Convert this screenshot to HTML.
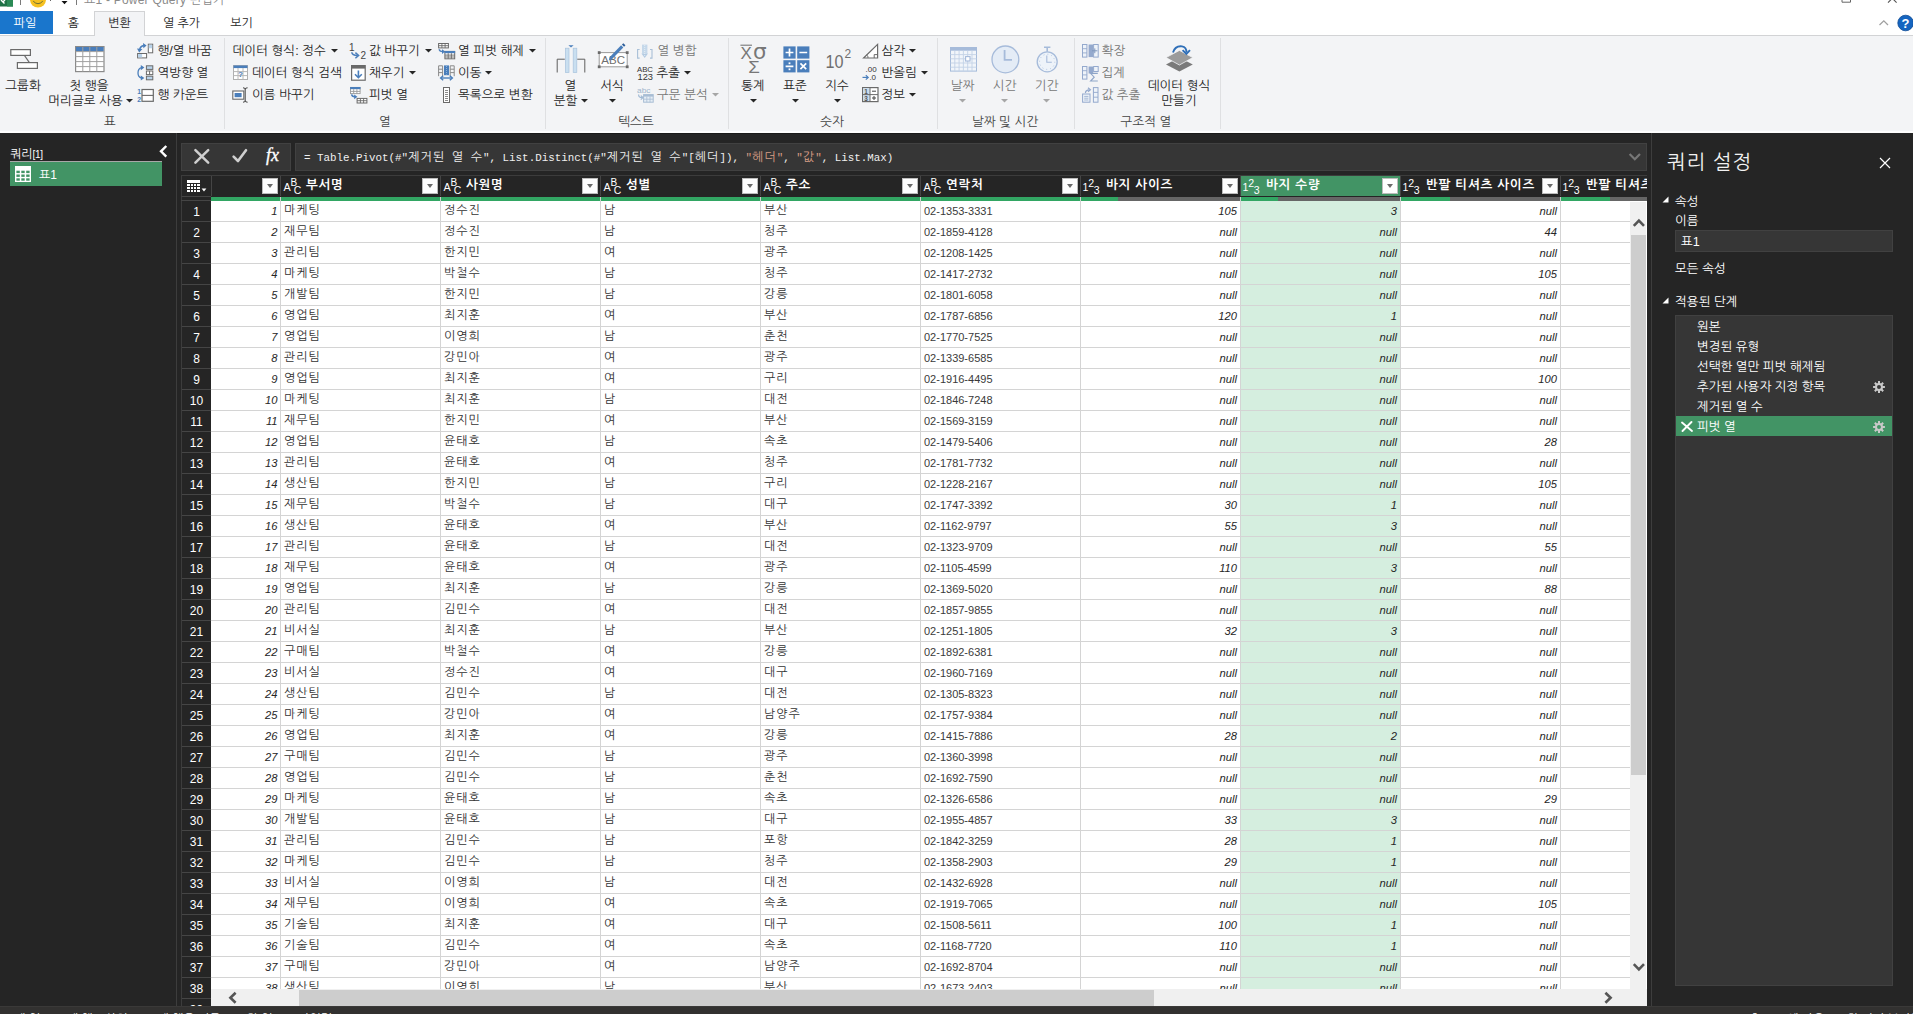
<!DOCTYPE html>
<html lang="ko"><head><meta charset="utf-8">
<title>표1 - Power Query 편집기</title>
<style>
*{box-sizing:border-box;margin:0;padding:0}
html,body{width:1913px;height:1014px;overflow:hidden}
body{position:relative;background:#252525;font-family:"Liberation Sans", "NanumGothic", "Noto Sans CJK KR", sans-serif;font-size:12px;color:#fff;line-height:1}
.a{position:absolute}
svg{position:absolute;overflow:visible}
/* title + tabs */
#title{position:absolute;left:0;top:0;width:1913px;height:36px;background:#fff}
#title .tt{position:absolute;left:84px;top:-6px;letter-spacing:.22px;font-size:12px;color:#8a8a8a;white-space:nowrap}
.tab{position:absolute;top:11px;height:24px;line-height:24px;font-size:12px;color:#262626;text-align:center;white-space:nowrap}
#tabline{position:absolute;left:0;top:35px;width:1913px;height:1px;background:#d2d3d5}
/* ribbon */
#rib{position:absolute;left:0;top:36px;width:1913px;height:95px;background:#f3f4f6}
#ribedge{position:absolute;left:0;top:131px;width:1913px;height:3px;background:#fdfdfd;border-bottom:1px solid #1a1a1a}
#rib .t{position:absolute;white-space:nowrap;color:#262626;font-size:12.6px;line-height:14px;letter-spacing:0}
#rib .g{color:#777}
#rib .c{transform:translateX(-50%);text-align:center}
#rib .gl{position:absolute;top:78.5px;letter-spacing:0;font-size:12.6px;line-height:14px;color:#444;white-space:nowrap;transform:translateX(-50%)}
#rib .sep{position:absolute;top:2px;width:1px;height:91px;background:#dfe0e2}
.dd{display:inline-block;width:0;height:0;border-left:3px solid transparent;border-right:3px solid transparent;border-top:3px solid #262626;vertical-align:middle;margin-left:4px;position:relative;top:-1px}
.g .dd,.dd.g{border-top-color:#a6a6a6}
/* panes */
#left{position:absolute;left:0;top:133px;width:176px;height:873px;background:#252525}
#lsplit{position:absolute;left:176px;top:133px;width:1px;height:873px;background:#3d3d3d}
#rsplit{position:absolute;left:1651px;top:133px;width:1px;height:873px;background:#3d3d3d}
/* formula bar */
.fb{position:absolute;top:143px;height:28px;background:#363636;border:1px solid #414141}
#ftext{position:absolute;left:304px;top:150px;font-family:"Liberation Mono","DejaVu Sans Mono",monospace;font-size:10.85px;line-height:14px;color:#f0f0f0;white-space:pre}
#ftext .fk{font-family:"NanumGothic","Noto Sans CJK KR",sans-serif;font-size:12px;letter-spacing:1.1px}
#ftext em{font-style:normal;color:#d69d85}
/* grid */
#ghead{position:absolute;left:181px;top:175px;width:1466px;height:22px;background:#252525;border-top:1px solid #3c3c3c;overflow:hidden}
#ghead .h{position:absolute;top:0;height:20px;width:160px;border-left:1px solid #454545;font-weight:bold;font-size:12px;line-height:20px;color:#fff;white-space:nowrap;overflow:hidden}
#ghead .h .nm{position:absolute;left:25px;top:-1.5px;letter-spacing:.8px;font-size:12.5px}
#ghead .h.sel{background:#429465}
.fbtn{position:absolute;right:2px;top:2px;width:16px;height:16px;background:#fff;border:1px solid #bdbdbd}
.fbtn:after{content:"";position:absolute;left:4px;top:5px;border-left:3.5px solid transparent;border-right:3.5px solid transparent;border-top:4px solid #6b6b6b}
.ty{position:absolute;left:3px;top:0;font-weight:normal;font-size:11px;color:#fff}
#qbar{position:absolute;left:181px;top:197px;width:1466px;height:4px;background:#252525;overflow:hidden}
#qbar b{position:absolute;top:0;height:4px;background:#32a663}
#qbar i{position:absolute;top:0;height:4px;background:#666}
#grid{position:absolute;left:181px;top:201px;width:1466px;height:788px;background:#fff;overflow:hidden}
#grid .selcol{position:absolute;left:1060px;top:0;width:159px;height:800px;background:#d5eedf}
#grid .vl{position:absolute;top:0;width:1px;height:800px;background:#d4d4d4}
.r{position:absolute;left:0;width:1450px;height:21px;border-bottom:1px solid #d4d4d4}
#rncol{position:absolute;left:181px;top:201px;width:30px;height:805px;overflow:hidden;background:#252525;border-left:1px solid #3c3c3c}
#rncol b{position:absolute;left:0;width:29px;height:21px;border-bottom:1px solid #454545;color:#fff;font-weight:normal;font-size:12px;line-height:22px;text-align:center}
.r .c{position:absolute;top:0;height:20px;line-height:20px;white-space:nowrap;color:#333}
.r .k{font-size:12px;font-style:normal;letter-spacing:1px;top:-1px}
.r .p{font-size:11px;color:#3a3a3a;padding-left:0}
.r .n{width:158px;text-align:right;font-size:11.2px;color:#262626;padding-right:1px}
.r .ix{left:30px;width:68px;text-align:right;font-size:11.2px;color:#262626;padding-right:1.5px}
/* scrollbars */
#vs{position:absolute;left:1630px;top:202px;width:16px;height:804px;background:#f0f0f0}
#vs .th{position:absolute;left:1px;top:33px;width:15px;height:540px;background:#cdcdcd}
#hs{position:absolute;left:211px;top:989px;width:1436px;height:17px;background:#f0f0f0}
#hs .th{position:absolute;left:88px;top:1px;width:855px;height:16px;background:#cdcdcd}
#rnfoot{position:absolute;left:181px;top:988px;width:30px;height:18px;background:#252525;border-left:1px solid #3c3c3c}
/* right pane */
#right{position:absolute;left:1652px;top:133px;width:261px;height:873px;background:#252525}
#right .t{position:absolute;white-space:nowrap;color:#fff;font-size:12.6px;line-height:14px;letter-spacing:0}
#steps{position:absolute;left:23px;top:182px;width:218px;height:671px;background:#363636;border:1px solid #414141}
#steps .s{position:absolute;left:0;width:216px;height:20px;line-height:23px;font-size:12.6px;padding-left:21px;white-space:nowrap;letter-spacing:-.05px}
#steps .s.sel{background:#429465}
#status{position:absolute;left:0;top:1006px;width:1913px;height:8px;background:#323130;border-top:1px solid #3a3938;overflow:hidden}
#status span{position:absolute;top:4.5px;letter-spacing:0;font-size:12px;line-height:14px;color:#fff;white-space:nowrap}
</style></head>
<body>

<div id="title">
<svg style="left:0;top:0" width="14" height="7" viewBox="0 0 14 7"><rect x="0" y="0" width="13" height="6.5" fill="#1e7145"/><rect x="7" y="0" width="6" height="6.5" fill="#2a8a55"/><path d="M1 0 L4.5 3.6 M5 0 L2.8 2" stroke="#fff" stroke-width="1.4" fill="none"/></svg>
<svg style="left:20px;top:0" width="60" height="9" viewBox="0 0 60 9"><rect x="0" y="0" width="1" height="5" fill="#7a7a7a"/><circle cx="18" cy="-0.5" r="8" fill="#f5c020"/><path d="M13.2 1.2 Q18 6.2 22.8 1.2" stroke="#4a5a3a" stroke-width="0.8" fill="none"/><rect x="30" y="0" width="1" height="1" fill="#666"/><path d="M41.5 1 h6 l-3 3.2z" fill="#111"/><rect x="56" y="0" width="1" height="5" fill="#7a7a7a"/></svg>
<span class="tt">표1 - Power Query 편집기</span>
<svg style="left:1840px;top:0" width="60" height="6" viewBox="0 0 60 6"><path d="M2 -3 h8.5 v5.2 h-8.5 z" stroke="#666" stroke-width="1" fill="none"/><path d="M48 -6 l8.6 8.6 M56.6 -6 l-8.6 8.6" stroke="#555" stroke-width="1.1" fill="none"/></svg>
</div>
<div class="tab" style="left:0;width:53px;height:23px;background:#1a76cc;color:#fff;padding-right:3px">파일</div>
<div class="tab" style="left:53px;width:41px">홈</div>
<div class="tab" style="left:94px;width:51px;background:#f3f4f6;border:1px solid #d2d3d5;border-bottom:none;height:25px;z-index:3;line-height:22px">변환</div>
<div class="tab" style="left:145px;width:73px">열 추가</div>
<div class="tab" style="left:218px;width:47px">보기</div>
<div id="tabline"></div>
<svg style="left:1876px;top:14px" width="37" height="20" viewBox="0 0 37 20"><path d="M3.5 11 L7.8 6.8 L12 11" stroke="#a0a0a0" stroke-width="1.3" fill="none"/><circle cx="29.6" cy="9" r="7.8" fill="#1565c0" stroke="#0d4a94" stroke-width="0.8"/><text x="29.6" y="13.5" font-size="13" font-weight="bold" fill="#fff" text-anchor="middle" font-family="Liberation Sans, sans-serif">?</text></svg>

<div id="rib"><svg style="left:10px;top:12px" width="30" height="24" viewBox="0 0 30 24"><rect x="0.8" y="1.6" width="19.6" height="5.8" fill="#fff" stroke="#6a6a6a" stroke-width="1.2"/><rect x="7.4" y="14.6" width="20" height="5.8" fill="#fff" stroke="#6a6a6a" stroke-width="1.2"/><path d="M14.4 7.4 L19.4 14.6" stroke="#6a6a6a" stroke-width="1.1"/></svg>
<span class="t c" style="left:23px;top:43.2px;">그룹화</span>
<svg style="left:75px;top:10px" width="30" height="27" viewBox="0 0 30 27"><rect x="0.6" y="0.6" width="28.4" height="25" fill="#fff" stroke="#8a8a8a" stroke-width="1.2"/><rect x="1" y="1" width="27.6" height="4.4" fill="#4a7ebb"/><path d="M0.6 5.6h28.4M0.6 10.6h28.4M0.6 15.6h28.4M0.6 20.6h28.4M7.8 1v24.6M14.8 1v24.6M21.8 1v24.6" stroke="#a0a0a0" stroke-width="1" fill="none"/></svg>
<span class="t c" style="left:89px;top:43.2px;">첫 행을</span>
<span class="t c" style="left:85.5px;top:58.2px;">머리글로 사용</span>
<svg style="left:125.5px;top:63px" width="7" height="4" viewBox="0 0 7 4"><path d="M0 0h7L3.5 3.6z" fill="#262626"/></svg>
<svg style="left:137px;top:7px" width="17" height="16" viewBox="0 0 17 16"><rect x="11.3" y="1.2" width="4.4" height="8.6" fill="#fff" stroke="#6a6a6a" stroke-width="1"/><rect x="11.8" y="1.7" width="3.4" height="3.6" fill="#b9d3ea"/><rect x="0.6" y="10.5" width="9" height="4.4" fill="#fff" stroke="#6a6a6a" stroke-width="1"/><rect x="1.1" y="11" width="4" height="3.4" fill="#b9d3ea"/><path d="M2.6 7 Q3.2 3.2 7 2.6" stroke="#4a7ebb" stroke-width="1.5" fill="none"/><path d="M6 0 L9.6 2.4 L6.4 5.2z M0 5.4 L5.4 6 L2.2 9.6z" fill="#4a7ebb"/></svg>
<span class="t" style="left:157.5px;top:7.7px;">행/열 바꿈</span>
<svg style="left:137px;top:29px" width="17" height="16" viewBox="0 0 17 16"><rect x="9.4" y="0.8" width="6.4" height="3.6" fill="#b9d3ea" stroke="#6a6a6a" stroke-width="1"/><rect x="9.4" y="6" width="6.4" height="3.6" fill="#fff" stroke="#6a6a6a" stroke-width="1"/><path d="M12.6 6v3.6" stroke="#6a6a6a" stroke-width="1"/><rect x="9.4" y="11.2" width="6.4" height="3.6" fill="#b9d3ea" stroke="#6a6a6a" stroke-width="1"/><path d="M4.6 2.6 Q1 3.5 1 8 Q1 12.2 4.6 13" stroke="#4a7ebb" stroke-width="1.3" fill="none"/><path d="M3.8 0 L7.4 2.6 L3.8 5.2z M3.8 10.4 L7.4 13 L3.8 15.6z" fill="#4a7ebb"/></svg>
<span class="t" style="left:157.5px;top:29.7px;">역방향 열</span>
<svg style="left:137px;top:51px" width="17" height="16" viewBox="0 0 17 16"><rect x="5" y="2.5" width="11.3" height="11.8" fill="#fff" stroke="#6a6a6a" stroke-width="1.2"/><path d="M5 8.4h11.3" stroke="#6a6a6a" stroke-width="1.1"/><text x="0.2" y="7.2" font-size="6.8" font-weight="bold" fill="#4a7ebb" font-family="Liberation Sans,sans-serif">1</text><text x="0.2" y="15.4" font-size="6.8" font-weight="bold" fill="#4a7ebb" font-family="Liberation Sans,sans-serif">2</text></svg>
<span class="t" style="left:157.5px;top:52.2px;">행 카운트</span>
<span class="gl" style="left:110px">표</span>
<div class="sep" style="left:224px"></div>
<span class="t" style="left:232.5px;top:7.7px;">데이터 형식: 정수</span>
<svg style="left:331px;top:13px" width="7" height="4" viewBox="0 0 7 4"><path d="M0 0h7L3.5 3.6z" fill="#262626"/></svg>
<svg style="left:232.5px;top:29px" width="15" height="15" viewBox="0 0 15 15"><rect x="0.5" y="0.5" width="14" height="14" fill="#fff" stroke="#b0b0b0" stroke-width="1"/><rect x="0.5" y="0.5" width="14" height="2.6" fill="#4a7ebb"/><path d="M0.5 6.6h14M0.5 10.6h14M5 3v11.5M10 3v11.5" stroke="#b8b8b8" stroke-width="1" fill="none"/><text x="7.4" y="11.6" font-size="8" font-weight="bold" fill="#4a7ebb" text-anchor="middle" font-family="Liberation Sans,sans-serif">?</text></svg>
<span class="t" style="left:252px;top:29.7px;">데이터 형식 검색</span>
<svg style="left:231.5px;top:51px" width="17" height="16" viewBox="0 0 17 16"><rect x="0.8" y="4" width="11" height="8.2" fill="#fff" stroke="#6a6a6a" stroke-width="1.1"/><rect x="2.6" y="6" width="7" height="4.2" fill="#4a7ebb"/><path d="M13.2 1.5v12.8M11 0.8 Q13.2 0.8 13.2 2.2 Q13.2 0.8 15.6 0.8M11 15.2 Q13.2 15.2 13.2 13.8 Q13.2 15.2 15.6 15.2" stroke="#444" stroke-width="1" fill="none"/></svg>
<span class="t" style="left:252px;top:52.2px;">이름 바꾸기</span>
<svg style="left:349px;top:6px" width="18" height="18" viewBox="0 0 18 18"><text x="0" y="9" font-size="10" fill="#444" font-family="Liberation Sans,sans-serif">1</text><text x="11.6" y="16.8" font-size="10" fill="#444" font-family="Liberation Sans,sans-serif">2</text><path d="M2.8 10.2 Q3 13.4 8.6 13.4" stroke="#4a7ebb" stroke-width="1.5" fill="none"/><path d="M6.4 10.6 L9.6 13.4 L6.4 16.2" stroke="#4a7ebb" stroke-width="1.5" fill="none"/></svg>
<span class="t" style="left:369px;top:7.7px;">값 바꾸기</span>
<svg style="left:425px;top:13px" width="7" height="4" viewBox="0 0 7 4"><path d="M0 0h7L3.5 3.6z" fill="#262626"/></svg>
<svg style="left:350.5px;top:29px" width="15" height="16" viewBox="0 0 15 16"><rect x="0.6" y="0.6" width="13.6" height="14.6" fill="#fff" stroke="#6a6a6a" stroke-width="1.2"/><rect x="0.6" y="0.6" width="13.6" height="3" fill="#6a6a6a"/><path d="M7.4 5.5v7M4 9.3 L7.4 12.7 L10.8 9.3" stroke="#4a7ebb" stroke-width="1.6" fill="none"/></svg>
<span class="t" style="left:369px;top:29.7px;">채우기</span>
<svg style="left:409px;top:35px" width="7" height="4" viewBox="0 0 7 4"><path d="M0 0h7L3.5 3.6z" fill="#262626"/></svg>
<svg style="left:349.5px;top:51px" width="18" height="17" viewBox="0 0 18 17"><rect x="0.5" y="0.4" width="9.6" height="6.2" fill="#fff" stroke="#9a9a9a" stroke-width="0.9"/><rect x="0.1" y="0" width="10.4" height="2.2" fill="#4a7ebb"/><path d="M0.5 4.4h9.6M3.7 2.2v4.4M6.9 2.2v4.4" stroke="#9a9a9a" stroke-width="0.9" fill="none"/><path d="M1.6 7.4 Q1.8 9.8 5 9.8" stroke="#4a7ebb" stroke-width="1.4" fill="none"/><path d="M4.2 7.4 L7.4 9.8 L4.2 12.2z" fill="#4a7ebb"/><rect x="7.1" y="11.4" width="9.8" height="4.6" fill="#fff" stroke="#6a6a6a" stroke-width="1"/><path d="M7.1 13.7h9.8M10.4 11.4v4.6M13.6 11.4v4.6" stroke="#6a6a6a" stroke-width="0.9" fill="none"/></svg>
<span class="t" style="left:369px;top:52.2px;">피벗 열</span>
<svg style="left:437.5px;top:7px" width="18" height="17" viewBox="0 0 18 17"><rect x="0.6" y="0.5" width="9.8" height="4.4" fill="#fff" stroke="#6a6a6a" stroke-width="1"/><path d="M0.6 2.7h9.8M3.9 0.5v4.4M7.1 0.5v4.4" stroke="#6a6a6a" stroke-width="0.9" fill="none"/><path d="M1.2 6.2 Q1.4 8.6 4.8 8.6" stroke="#4a7ebb" stroke-width="1.4" fill="none"/><path d="M4 6.2 L7.2 8.6 L4 11z" fill="#4a7ebb"/><rect x="6.9" y="8.4" width="9.8" height="7.4" fill="#fff" stroke="#6a6a6a" stroke-width="1"/><rect x="6.5" y="8" width="10.6" height="2.2" fill="#4a7ebb"/><path d="M6.9 12.1h9.8M6.9 14h9.8M10.2 10.2v5.6M13.4 10.2v5.6" stroke="#6a6a6a" stroke-width="0.9" fill="none"/></svg>
<span class="t" style="left:458px;top:7.7px;">열 피벗 해제</span>
<svg style="left:529px;top:13px" width="7" height="4" viewBox="0 0 7 4"><path d="M0 0h7L3.5 3.6z" fill="#262626"/></svg>
<svg style="left:437.5px;top:29px" width="17" height="16" viewBox="0 0 17 16"><path d="M0.6 0.8h4v10.4M0.6 0.8v10.4M0.6 4.2h4M0.6 7.6h4M12.2 0.8h4v10.4M12.2 0.8v10.4M12.2 4.2h4M12.2 7.6h4" stroke="#8a8a8a" stroke-width="1" fill="none"/><rect x="6" y="0.4" width="5" height="9.8" fill="#4a7ebb"/><path d="M8.5 1v8.6" stroke="#9cc0e4" stroke-width="0.8" stroke-dasharray="1 1"/><path d="M3 13h11" stroke="#4a7ebb" stroke-width="1.4"/><path d="M5.2 10.8 L2.6 13 L5.2 15.2M11.8 10.8 L14.4 13 L11.8 15.2" stroke="#4a7ebb" stroke-width="1.4" fill="none"/></svg>
<span class="t" style="left:458px;top:29.7px;">이동</span>
<svg style="left:485px;top:35px" width="7" height="4" viewBox="0 0 7 4"><path d="M0 0h7L3.5 3.6z" fill="#262626"/></svg>
<svg style="left:442px;top:51px" width="9" height="16" viewBox="0 0 9 16"><rect x="1" y="0.5" width="6" height="15" fill="#fff" stroke="#6a6a6a" stroke-width="1" shape-rendering="crispEdges"/><path d="M3 3.5h2.6M3 5.5h2.6M3 7.5h2.6M3 9.5h2.6M3 11.5h2.6M3 13.5h2.6" stroke="#8a8a8a" stroke-width="1" shape-rendering="crispEdges"/></svg>
<span class="t" style="left:458px;top:52.2px;">목록으로 변환</span>
<span class="gl" style="left:385px">열</span>
<div class="sep" style="left:545px"></div>
<svg style="left:556px;top:8px" width="30" height="29" viewBox="0 0 30 29"><path d="M1.2 28.5V15.2h7.6M28.8 28.5V15.2h-7.6" stroke="#5e5e5e" stroke-width="1" fill="none"/><rect x="9.4" y="4.2" width="3.6" height="24.4" fill="#c9dff0" stroke="#a9c3dc" stroke-width="0.7"/><rect x="17.2" y="4.2" width="3.6" height="24.4" fill="#c9dff0" stroke="#a9c3dc" stroke-width="0.7"/><path d="M12.4 1.2h5.2L15 3.6z" fill="#4a7ebb"/></svg>
<span class="t c" style="left:570.5px;top:43.2px;">열</span>
<span class="t c" style="left:565.5px;top:58.2px;">분할</span>
<svg style="left:581px;top:63px" width="7" height="4" viewBox="0 0 7 4"><path d="M0 0h7L3.5 3.6z" fill="#262626"/></svg>
<svg style="left:596.5px;top:6px" width="33" height="28" viewBox="0 0 33 28"><rect x="2.2" y="10.6" width="28" height="14.2" fill="#fff" stroke="#9a9a9a" stroke-width="1"/><rect x="0.8" y="9.2" width="2.8" height="2.8" fill="#6a6a6a"/><rect x="28.8" y="9.2" width="2.8" height="2.8" fill="#6a6a6a"/><rect x="0.8" y="23.4" width="2.8" height="2.8" fill="#6a6a6a"/><rect x="28.8" y="23.4" width="2.8" height="2.8" fill="#6a6a6a"/><text x="16.2" y="22.2" font-size="11.5" fill="#6e6e6e" text-anchor="middle" font-family="Liberation Sans,sans-serif">ABC</text><path d="M13.4 16.6 L25.2 4.4" stroke="#4a7ebb" stroke-width="3"/><path d="M11.8 18.4 L14.6 17.6 L12.5 15.6z" fill="#4a7ebb"/><path d="M26 3.6 L27.4 2.2" stroke="#2e5e9a" stroke-width="3"/></svg>
<span class="t c" style="left:612px;top:43.2px;">서식</span>
<svg style="left:609px;top:63px" width="7" height="4" viewBox="0 0 7 4"><path d="M0 0h7L3.5 3.6z" fill="#262626"/></svg>
<svg style="left:636.5px;top:8px" width="16" height="15" viewBox="0 0 16 15"><path d="M2.6 5.5H0.6v8.6h2M13 5.5h2v8.6h-2" stroke="#a9c0d8" stroke-width="1.1" fill="none"/><rect x="5" y="0.6" width="5.4" height="9" fill="#c5d8ea"/><path d="M4.4 9.6 L7.7 14 L11 9.6z" fill="#b4cbe2"/><path d="M7.7 1v12" stroke="#e9f0f7" stroke-width="0.9" stroke-dasharray="1 1"/></svg>
<span class="t g" style="left:657.5px;top:7.7px;">열 병합</span>
<svg style="left:636.5px;top:28.5px" width="17" height="16" viewBox="0 0 17 16"><text x="0" y="7" font-size="7.6" fill="#333" font-family="Liberation Sans,sans-serif" textLength="16" lengthAdjust="spacingAndGlyphs">ABC</text><text x="0.5" y="15.2" font-size="8.6" fill="#333" font-family="Liberation Sans,sans-serif" textLength="15.5" lengthAdjust="spacingAndGlyphs">123</text></svg>
<span class="t" style="left:656.5px;top:29.7px;">추출</span>
<svg style="left:684px;top:35px" width="7" height="4" viewBox="0 0 7 4"><path d="M0 0h7L3.5 3.6z" fill="#262626"/></svg>
<svg style="left:636.5px;top:51px" width="17" height="16" viewBox="0 0 17 16"><text x="0" y="6.4" font-size="8" fill="#9fb4cc" font-family="Liberation Sans,sans-serif" textLength="13.5" lengthAdjust="spacingAndGlyphs">abc</text><path d="M1.6 7.4 Q1.6 10.6 5 10.6" stroke="#9fb8d4" stroke-width="1.2" fill="none"/><path d="M3.8 8.6 L6 10.6 L3.8 12.6" stroke="#9fb8d4" stroke-width="1.2" fill="none"/><rect x="6.6" y="7.6" width="9.6" height="7.6" fill="#e6eef6" stroke="#a8bdd4" stroke-width="1"/><rect x="6.6" y="7.6" width="9.6" height="2" fill="#a8bdd4"/><path d="M6.6 12.2h9.6M9.8 9.6v5.6M13 9.6v5.6" stroke="#a8bdd4" stroke-width="0.8"/></svg>
<span class="t g" style="left:657px;top:52.2px;">구문 분석</span>
<svg style="left:712px;top:57px" width="7" height="4" viewBox="0 0 7 4"><path d="M0 0h7L3.5 3.6z" fill="#a6a6a6"/></svg>
<span class="gl" style="left:636px">텍스트</span>
<div class="sep" style="left:728px"></div>
<svg style="left:740px;top:8px" width="28" height="30" viewBox="0 0 28 30"><text x="0.6" y="14.7" font-size="16.9" fill="#777" font-family="Liberation Sans,sans-serif">X</text><path d="M0.4 1.2h11.6" stroke="#777" stroke-width="1.1"/><text x="13" y="15" font-size="21.5" fill="#777" font-family="DejaVu Sans,Liberation Sans,sans-serif">σ</text><text x="8.2" y="29.1" font-size="17" fill="#777" font-family="Liberation Sans,sans-serif" textLength="11.6" lengthAdjust="spacingAndGlyphs">Σ</text></svg>
<span class="t c" style="left:753px;top:43.2px;">통계</span>
<svg style="left:750px;top:63px" width="7" height="4" viewBox="0 0 7 4"><path d="M0 0h7L3.5 3.6z" fill="#262626"/></svg>
<svg style="left:782.5px;top:9.5px" width="27" height="27" viewBox="0 0 27 27"><rect x="0.4" y="0.4" width="12.2" height="12.2" fill="#4a7ebb"/><rect x="14.2" y="0.4" width="12.2" height="12.2" fill="#4a7ebb"/><rect x="0.4" y="14.2" width="12.2" height="12.2" fill="#4a7ebb"/><rect x="14.2" y="14.2" width="12.2" height="12.2" fill="#4a7ebb"/><path d="M6.5 2.6v7.8M2.6 6.5h7.8M16.4 6.5h7.8M2.6 20.3h7.8M17.4 17.4l5.8 5.8M23.2 17.4l-5.8 5.8" stroke="#fff" stroke-width="1.7" fill="none"/><rect x="5.6" y="16.4" width="1.8" height="1.8" fill="#fff"/><rect x="5.6" y="22.4" width="1.8" height="1.8" fill="#fff"/></svg>
<span class="t c" style="left:795px;top:43.2px;">표준</span>
<svg style="left:792px;top:63px" width="7" height="4" viewBox="0 0 7 4"><path d="M0 0h7L3.5 3.6z" fill="#262626"/></svg>
<svg style="left:825px;top:10px" width="27" height="24" viewBox="0 0 27 24"><text x="0.4" y="21.9" font-size="17.6" fill="#6e6e6e" font-family="Liberation Sans,sans-serif" textLength="18" lengthAdjust="spacingAndGlyphs">10</text><text x="19.6" y="12" font-size="12" fill="#6e6e6e" font-family="Liberation Sans,sans-serif">2</text></svg>
<span class="t c" style="left:837px;top:43.2px;">지수</span>
<svg style="left:834px;top:63px" width="7" height="4" viewBox="0 0 7 4"><path d="M0 0h7L3.5 3.6z" fill="#262626"/></svg>
<svg style="left:861.5px;top:7px" width="17" height="16" viewBox="0 0 17 16"><path d="M1.6 15 L15.6 1.4 V15 Z" fill="#fff" stroke="#6a6a6a" stroke-width="1.2"/><path d="M12.2 15v-3.4h3.4" stroke="#6a6a6a" stroke-width="1" fill="none"/><path d="M6 15 Q6.4 12.6 4.6 12" stroke="#6a6a6a" stroke-width="0.9" fill="none"/></svg>
<span class="t" style="left:881.5px;top:7.7px;">삼각</span>
<svg style="left:909px;top:13px" width="7" height="4" viewBox="0 0 7 4"><path d="M0 0h7L3.5 3.6z" fill="#262626"/></svg>
<svg style="left:861.5px;top:29px" width="17" height="16" viewBox="0 0 17 16"><text x="3.6" y="7.4" font-size="8" fill="#333" font-family="Liberation Sans,sans-serif">.00</text><text x="7.4" y="15.4" font-size="8" fill="#333" font-family="Liberation Sans,sans-serif">.0</text><path d="M0.5 12.4h5.4" stroke="#4a7ebb" stroke-width="1.2"/><path d="M3.8 10.2 L6.2 12.4 L3.8 14.6" stroke="#4a7ebb" stroke-width="1.2" fill="none"/></svg>
<span class="t" style="left:881.5px;top:29.7px;">반올림</span>
<svg style="left:921px;top:35px" width="7" height="4" viewBox="0 0 7 4"><path d="M0 0h7L3.5 3.6z" fill="#262626"/></svg>
<svg style="left:861.5px;top:51px" width="17" height="16" viewBox="0 0 17 16"><rect x="0.6" y="0.6" width="15.4" height="14" fill="#fff" stroke="#6a6a6a" stroke-width="1.2"/><rect x="1.2" y="1.2" width="6.6" height="12.8" fill="#c9dced"/><path d="M8 0.6v14M0.6 7.6h15.4" stroke="#6a6a6a" stroke-width="1"/><text x="2.2" y="6.6" font-size="6.4" font-weight="bold" fill="#555" font-family="Liberation Sans,sans-serif">1</text><text x="2.2" y="13.6" font-size="6.4" font-weight="bold" fill="#555" font-family="Liberation Sans,sans-serif">3</text><path d="M10 4.2h4M10 11h4M12 9v4" stroke="#444" stroke-width="1"/></svg>
<span class="t" style="left:881.5px;top:52.2px;">정보</span>
<svg style="left:909px;top:57px" width="7" height="4" viewBox="0 0 7 4"><path d="M0 0h7L3.5 3.6z" fill="#262626"/></svg>
<span class="gl" style="left:832px">숫자</span>
<div class="sep" style="left:937px"></div>
<svg style="left:949.5px;top:10.5px" width="27" height="25" viewBox="0 0 27 25"><rect x="0.5" y="0.5" width="26" height="23.6" fill="#f1f5fa" stroke="#a6bbda" stroke-width="1"/><rect x="0.5" y="0.5" width="26" height="3.2" fill="#a6bbda"/><path d="M0.5 7.6h26M0.5 11.8h26M0.5 16h26M0.5 20.2h26M4.8 3.7v20.4M9.1 3.7v20.4M13.4 3.7v20.4M17.7 3.7v20.4M22 3.7v20.4" stroke="#c3d2e6" stroke-width="0.9"/><rect x="15.6" y="9.6" width="4.4" height="4.4" fill="#fff" stroke="#a6bbda" stroke-width="1.1"/></svg>
<span class="t c g" style="left:962.5px;top:43.2px;">날짜</span>
<svg style="left:959px;top:63px" width="7" height="4" viewBox="0 0 7 4"><path d="M0 0h7L3.5 3.6z" fill="#a6a6a6"/></svg>
<svg style="left:990.5px;top:8.5px" width="29" height="29" viewBox="0 0 29 29"><circle cx="14.4" cy="14.4" r="13.4" fill="#e4ecf6" stroke="#a6bbda" stroke-width="1.3"/><path d="M13.6 5v9.8h7.4" stroke="#a6bbda" stroke-width="1.8" fill="none"/></svg>
<span class="t c g" style="left:1004.5px;top:43.2px;">시간</span>
<svg style="left:1001px;top:63px" width="7" height="4" viewBox="0 0 7 4"><path d="M0 0h7L3.5 3.6z" fill="#a6a6a6"/></svg>
<svg style="left:1035.5px;top:9.5px" width="23" height="27" viewBox="0 0 23 27"><circle cx="11.2" cy="15.8" r="10" fill="#eef3f9" stroke="#a6bbda" stroke-width="1.3"/><circle cx="11.2" cy="15.8" r="7.6" fill="none" stroke="#a6bbda" stroke-width="0.9" stroke-dasharray="0.9 3.08"/><path d="M8 1.2h6.4M11.2 1.2v4.6" stroke="#a6bbda" stroke-width="1.6" fill="none"/><path d="M10.8 9.6v6.6h5" stroke="#a6bbda" stroke-width="1.1" fill="none"/></svg>
<span class="t c g" style="left:1046.5px;top:43.2px;">기간</span>
<svg style="left:1043px;top:63px" width="7" height="4" viewBox="0 0 7 4"><path d="M0 0h7L3.5 3.6z" fill="#a6a6a6"/></svg>
<span class="gl" style="left:1005px">날짜 및 시간</span>
<div class="sep" style="left:1074px"></div>
<svg style="left:1081.5px;top:7.5px" width="17" height="14" viewBox="0 0 17 14"><rect x="0.5" y="0.5" width="4.4" height="12.6" fill="#eef3f9" stroke="#94a9cd" stroke-width="1"/><path d="M0.5 4.7h4.4M0.5 8.9h4.4" stroke="#94a9cd" stroke-width="0.9"/><rect x="6.6" y="0.5" width="4.6" height="12.6" fill="#94a9cd"/><rect x="11.6" y="0.5" width="4.6" height="12.6" fill="#eef3f9" stroke="#94a9cd" stroke-width="1"/><path d="M10 6.8h5.4M12.8 4.4v4.8" stroke="#7f97bd" stroke-width="1"/></svg>
<span class="t g" style="left:1101.5px;top:7.7px;">확장</span>
<svg style="left:1081.5px;top:29.5px" width="17" height="16" viewBox="0 0 17 16"><rect x="0.5" y="0.5" width="4.4" height="12.6" fill="#eef3f9" stroke="#94a9cd" stroke-width="1"/><path d="M0.5 4.7h4.4M0.5 8.9h4.4" stroke="#94a9cd" stroke-width="0.9"/><rect x="6.6" y="0.5" width="4.6" height="7" fill="#94a9cd"/><rect x="11.6" y="0.5" width="4.6" height="5" fill="#eef3f9" stroke="#94a9cd" stroke-width="1"/><path d="M15.8 7.4H8.6l3.6 3.8-3.6 3.8h7.2" stroke="#8ea5c8" stroke-width="1.1" fill="none"/></svg>
<span class="t g" style="left:1101.5px;top:29.7px;">집계</span>
<svg style="left:1081.5px;top:51px" width="17" height="16" viewBox="0 0 17 16"><rect x="11.4" y="0.6" width="4.6" height="14.6" fill="#eef3f9" stroke="#94a9cd" stroke-width="1"/><path d="M11.4 5.4h4.6M11.4 10.2h4.6" stroke="#94a9cd" stroke-width="0.9"/><rect x="0.6" y="7" width="7.4" height="8.2" fill="#eef3f9" stroke="#94a9cd" stroke-width="1"/><path d="M2.2 9.4h4.2M2.2 11.2h4.2M2.2 13h4.2" stroke="#94a9cd" stroke-width="0.8"/><path d="M3.4 6 Q3.6 2.8 7.4 2.8" stroke="#94a9cd" stroke-width="1.2" fill="none"/><path d="M6 0.8 L8.4 2.8 L6 4.8" stroke="#94a9cd" stroke-width="1.2" fill="none"/></svg>
<span class="t g" style="left:1101.5px;top:52.2px;">값 추출</span>
<svg style="left:1164.5px;top:8px" width="29" height="29" viewBox="0 0 29 29"><path d="M1 20.4 L14.4 13.6 L27.8 20.4 L14.4 27.6z" fill="#7a7a7a"/><path d="M1 13.6 L14.4 6.4 L27.8 13.6 L14.4 21z" fill="#9b9b9b" stroke="#f3f4f6" stroke-width="0.8"/><path d="M8 8.6 Q10 1.6 17 2.4 Q21.6 3.2 21.4 8.4" stroke="#2f6fb8" stroke-width="1.9" fill="none"/><path d="M17.6 6.2 L21.4 10 L25 6.2" stroke="#2f6fb8" stroke-width="1.9" fill="none"/></svg>
<span class="t c" style="left:1179px;top:43.2px;">데이터 형식</span>
<span class="t c" style="left:1179px;top:58.2px;">만들기</span>
<span class="gl" style="left:1146px">구조적 열</span>
<div class="sep" style="left:1220px"></div></div><div id="ribedge"></div>
<div id="left">
<span class="a" style="left:10px;top:14px;font-size:12px;line-height:14px;color:#fff;white-space:nowrap">쿼리<span style="font-size:10px;letter-spacing:-.3px">[1]</span></span>
<svg style="left:158px;top:12px" width="10" height="13" viewBox="0 0 10 13"><path d="M8.3 1 L3 6.3 L8.3 11.6" stroke="#fff" stroke-width="2.4" fill="none"/></svg>
<div class="a" style="left:10px;top:28px;width:152px;height:1px;background:#a8a8a8"></div>
<div class="a" style="left:10px;top:29px;width:152px;height:24px;background:#429465"></div>
<svg style="left:15px;top:33px" width="16" height="16" viewBox="0 0 16 16"><rect x="0" y="0" width="16" height="16" fill="#fff"/><rect x="1.4" y="4.7" width="3.4" height="2.4" fill="#429465"/><rect x="1.4" y="8.5" width="3.4" height="2.4" fill="#429465"/><rect x="1.4" y="12.3" width="3.4" height="2.4" fill="#429465"/><rect x="6.3" y="4.7" width="3.4" height="2.4" fill="#429465"/><rect x="6.3" y="8.5" width="3.4" height="2.4" fill="#429465"/><rect x="6.3" y="12.3" width="3.4" height="2.4" fill="#429465"/><rect x="11.2" y="4.7" width="3.4" height="2.4" fill="#429465"/><rect x="11.2" y="8.5" width="3.4" height="2.4" fill="#429465"/><rect x="11.2" y="12.3" width="3.4" height="2.4" fill="#429465"/></svg>
<span class="a" style="left:39px;top:34.5px;font-size:12px;line-height:14px;color:#fff;white-space:nowrap">표1</span>
</div><div id="lsplit"></div>
<div class="fb" style="left:181px;width:110px"></div>
<svg style="left:193px;top:148px" width="90" height="18" viewBox="0 0 90 18"><path d="M2.4 2.2 L15.2 14.6 M15.2 2.2 L2.4 14.6" stroke="#cfcfcf" stroke-width="2.5" stroke-linecap="round" fill="none"/><path d="M40.6 8.6 L45 13 L53 2.2" stroke="#cfcfcf" stroke-width="2.6" stroke-linecap="round" stroke-linejoin="round" fill="none"/><text x="73" y="13" font-family="Liberation Serif, serif" font-style="italic" font-size="18" fill="#fff" stroke="#fff" stroke-width="0.35">fx</text></svg>
<div class="fb" style="left:295px;width:1352px"></div>
<div id="ftext">= Table.Pivot(#"<span class="fk">제거된</span> <span class="fk">열</span> <span class="fk">수</span>", List.Distinct(#"<span class="fk">제거된</span> <span class="fk">열</span> <span class="fk">수</span>"[<span class="fk">헤더</span>]), <em>"<span class="fk">헤더</span>"</em>, <em>"<span class="fk">값</span>"</em>, List.Max)</div>
<svg style="left:1628px;top:152px" width="14" height="10" viewBox="0 0 14 10"><path d="M1.6 2 L6.8 7.2 L12 2" stroke="#777" stroke-width="2.2" fill="none"/></svg>

<div id="ghead"><div class="h" style="left:0;width:30px;height:21px;border-left:1px solid #3c3c3c;border-bottom:1px solid #454545"><svg style="left:5px;top:4px" width="22" height="14" viewBox="0 0 22 14"><rect x="0" y="0" width="13" height="12" fill="#fff" shape-rendering="crispEdges"/><path d="M0 3.5h13M0 6.5h13M0 9.5h13M3.5 3v9M6.5 3v9M9.5 3v9" stroke="#252525" stroke-width="1" fill="none" shape-rendering="crispEdges"/><path d="M14.6 8.6h4.8l-2.4 3z" fill="#fff"/></svg></div><div class="h" style="left:30px;width:69px"><span class="fbtn"></span></div><div class="h" style="left:99px"><svg style="left:1px;top:0" width="20" height="21" viewBox="0 0 20 21"><text x="1.4" y="15.2" font-size="10.8" font-family="Liberation Sans,sans-serif" font-weight="normal" fill="#fff">A</text><text x="8.6" y="9.8" font-size="10" font-family="Liberation Sans,sans-serif" font-weight="normal" fill="#fff">B</text><text x="11.8" y="18.2" font-size="10.4" font-family="Liberation Sans,sans-serif" font-weight="normal" fill="#fff">C</text></svg><span class="nm">부서명</span><span class="fbtn"></span></div><div class="h" style="left:259px"><svg style="left:1px;top:0" width="20" height="21" viewBox="0 0 20 21"><text x="1.4" y="15.2" font-size="10.8" font-family="Liberation Sans,sans-serif" font-weight="normal" fill="#fff">A</text><text x="8.6" y="9.8" font-size="10" font-family="Liberation Sans,sans-serif" font-weight="normal" fill="#fff">B</text><text x="11.8" y="18.2" font-size="10.4" font-family="Liberation Sans,sans-serif" font-weight="normal" fill="#fff">C</text></svg><span class="nm">사원명</span><span class="fbtn"></span></div><div class="h" style="left:419px"><svg style="left:1px;top:0" width="20" height="21" viewBox="0 0 20 21"><text x="1.4" y="15.2" font-size="10.8" font-family="Liberation Sans,sans-serif" font-weight="normal" fill="#fff">A</text><text x="8.6" y="9.8" font-size="10" font-family="Liberation Sans,sans-serif" font-weight="normal" fill="#fff">B</text><text x="11.8" y="18.2" font-size="10.4" font-family="Liberation Sans,sans-serif" font-weight="normal" fill="#fff">C</text></svg><span class="nm">성별</span><span class="fbtn"></span></div><div class="h" style="left:579px"><svg style="left:1px;top:0" width="20" height="21" viewBox="0 0 20 21"><text x="1.4" y="15.2" font-size="10.8" font-family="Liberation Sans,sans-serif" font-weight="normal" fill="#fff">A</text><text x="8.6" y="9.8" font-size="10" font-family="Liberation Sans,sans-serif" font-weight="normal" fill="#fff">B</text><text x="11.8" y="18.2" font-size="10.4" font-family="Liberation Sans,sans-serif" font-weight="normal" fill="#fff">C</text></svg><span class="nm">주소</span><span class="fbtn"></span></div><div class="h" style="left:739px"><svg style="left:1px;top:0" width="20" height="21" viewBox="0 0 20 21"><text x="1.4" y="15.2" font-size="10.8" font-family="Liberation Sans,sans-serif" font-weight="normal" fill="#fff">A</text><text x="8.6" y="9.8" font-size="10" font-family="Liberation Sans,sans-serif" font-weight="normal" fill="#fff">B</text><text x="11.8" y="18.2" font-size="10.4" font-family="Liberation Sans,sans-serif" font-weight="normal" fill="#fff">C</text></svg><span class="nm">연락처</span><span class="fbtn"></span></div><div class="h" style="left:899px"><svg style="left:1px;top:0" width="20" height="21" viewBox="0 0 20 21"><text x="0.6" y="15.4" font-size="10.6" font-family="Liberation Sans,sans-serif" font-weight="normal" fill="#fff">1</text><text x="6.2" y="11.2" font-size="10.6" font-family="Liberation Sans,sans-serif" font-weight="normal" fill="#fff">2</text><text x="11.8" y="17.7" font-size="10.6" font-family="Liberation Sans,sans-serif" font-weight="normal" fill="#fff">3</text></svg><span class="nm">바지 사이즈</span><span class="fbtn"></span></div><div class="h sel" style="left:1059px"><svg style="left:1px;top:0" width="20" height="21" viewBox="0 0 20 21"><text x="0.6" y="15.4" font-size="10.6" font-family="Liberation Sans,sans-serif" font-weight="normal" fill="#fff">1</text><text x="6.2" y="11.2" font-size="10.6" font-family="Liberation Sans,sans-serif" font-weight="normal" fill="#fff">2</text><text x="11.8" y="17.7" font-size="10.6" font-family="Liberation Sans,sans-serif" font-weight="normal" fill="#fff">3</text></svg><span class="nm">바지 수량</span><span class="fbtn"></span></div><div class="h" style="left:1219px"><svg style="left:1px;top:0" width="20" height="21" viewBox="0 0 20 21"><text x="0.6" y="15.4" font-size="10.6" font-family="Liberation Sans,sans-serif" font-weight="normal" fill="#fff">1</text><text x="6.2" y="11.2" font-size="10.6" font-family="Liberation Sans,sans-serif" font-weight="normal" fill="#fff">2</text><text x="11.8" y="17.7" font-size="10.6" font-family="Liberation Sans,sans-serif" font-weight="normal" fill="#fff">3</text></svg><span class="nm">반팔 티셔츠 사이즈</span><span class="fbtn"></span></div><div class="h" style="left:1379px"><svg style="left:1px;top:0" width="20" height="21" viewBox="0 0 20 21"><text x="0.6" y="15.4" font-size="10.6" font-family="Liberation Sans,sans-serif" font-weight="normal" fill="#fff">1</text><text x="6.2" y="11.2" font-size="10.6" font-family="Liberation Sans,sans-serif" font-weight="normal" fill="#fff">2</text><text x="11.8" y="17.7" font-size="10.6" font-family="Liberation Sans,sans-serif" font-weight="normal" fill="#fff">3</text></svg><span class="nm">반팔 티셔츠 수량</span><span class="fbtn"></span></div></div>
<div id="qbar"><b style="left:30px;width:1436px"></b><i style="left:900px;width:159px"></i><b style="left:900px;width:37px"></b><i style="left:1060px;width:159px"></i><b style="left:1060px;width:37px"></b><i style="left:1220px;width:159px"></i><b style="left:1220px;width:49px"></b><i style="left:1380px;width:86px"></i><b style="left:1380px;width:49px"></b><u class="a" style="left:99px;top:0;width:1px;height:4px;background:#d0d0d0"></u><u class="a" style="left:259px;top:0;width:1px;height:4px;background:#d0d0d0"></u><u class="a" style="left:419px;top:0;width:1px;height:4px;background:#d0d0d0"></u><u class="a" style="left:579px;top:0;width:1px;height:4px;background:#d0d0d0"></u><u class="a" style="left:739px;top:0;width:1px;height:4px;background:#d0d0d0"></u><u class="a" style="left:899px;top:0;width:1px;height:4px;background:#d0d0d0"></u><u class="a" style="left:1059px;top:0;width:1px;height:4px;background:#d0d0d0"></u><u class="a" style="left:1219px;top:0;width:1px;height:4px;background:#d0d0d0"></u><u class="a" style="left:1379px;top:0;width:1px;height:4px;background:#d0d0d0"></u><u class="a" style="left:0;top:0;width:1px;height:4px;background:#3c3c3c"></u><u class="a" style="left:0;top:3px;width:30px;height:1px;background:#454545"></u></div>
<div id="grid">
<div class="selcol"></div><div class="vl" style="left:99px"></div><div class="vl" style="left:259px"></div><div class="vl" style="left:419px"></div><div class="vl" style="left:579px"></div><div class="vl" style="left:739px"></div><div class="vl" style="left:899px"></div><div class="vl" style="left:1059px"></div><div class="vl" style="left:1219px"></div><div class="vl" style="left:1379px"></div>
<div class="r" style="top:0px"><i class="c ix">1</i><span class="c k" style="left:103px">마케팅</span><span class="c k" style="left:263px">정수진</span><span class="c k" style="left:423px">남</span><span class="c k" style="left:583px">부산</span><span class="c p" style="left:743px">02-1353-3331</span><i class="c n" style="left:899px">105</i><i class="c n" style="left:1059px">3</i><i class="c n" style="left:1219px">null</i></div>
<div class="r" style="top:21px"><i class="c ix">2</i><span class="c k" style="left:103px">재무팀</span><span class="c k" style="left:263px">정수진</span><span class="c k" style="left:423px">남</span><span class="c k" style="left:583px">청주</span><span class="c p" style="left:743px">02-1859-4128</span><i class="c n" style="left:899px">null</i><i class="c n" style="left:1059px">null</i><i class="c n" style="left:1219px">44</i></div>
<div class="r" style="top:42px"><i class="c ix">3</i><span class="c k" style="left:103px">관리팀</span><span class="c k" style="left:263px">한지민</span><span class="c k" style="left:423px">여</span><span class="c k" style="left:583px">광주</span><span class="c p" style="left:743px">02-1208-1425</span><i class="c n" style="left:899px">null</i><i class="c n" style="left:1059px">null</i><i class="c n" style="left:1219px">null</i></div>
<div class="r" style="top:63px"><i class="c ix">4</i><span class="c k" style="left:103px">마케팅</span><span class="c k" style="left:263px">박철수</span><span class="c k" style="left:423px">남</span><span class="c k" style="left:583px">청주</span><span class="c p" style="left:743px">02-1417-2732</span><i class="c n" style="left:899px">null</i><i class="c n" style="left:1059px">null</i><i class="c n" style="left:1219px">105</i></div>
<div class="r" style="top:84px"><i class="c ix">5</i><span class="c k" style="left:103px">개발팀</span><span class="c k" style="left:263px">한지민</span><span class="c k" style="left:423px">남</span><span class="c k" style="left:583px">강릉</span><span class="c p" style="left:743px">02-1801-6058</span><i class="c n" style="left:899px">null</i><i class="c n" style="left:1059px">null</i><i class="c n" style="left:1219px">null</i></div>
<div class="r" style="top:105px"><i class="c ix">6</i><span class="c k" style="left:103px">영업팀</span><span class="c k" style="left:263px">최지훈</span><span class="c k" style="left:423px">여</span><span class="c k" style="left:583px">부산</span><span class="c p" style="left:743px">02-1787-6856</span><i class="c n" style="left:899px">120</i><i class="c n" style="left:1059px">1</i><i class="c n" style="left:1219px">null</i></div>
<div class="r" style="top:126px"><i class="c ix">7</i><span class="c k" style="left:103px">영업팀</span><span class="c k" style="left:263px">이영희</span><span class="c k" style="left:423px">남</span><span class="c k" style="left:583px">춘천</span><span class="c p" style="left:743px">02-1770-7525</span><i class="c n" style="left:899px">null</i><i class="c n" style="left:1059px">null</i><i class="c n" style="left:1219px">null</i></div>
<div class="r" style="top:147px"><i class="c ix">8</i><span class="c k" style="left:103px">관리팀</span><span class="c k" style="left:263px">강민아</span><span class="c k" style="left:423px">여</span><span class="c k" style="left:583px">광주</span><span class="c p" style="left:743px">02-1339-6585</span><i class="c n" style="left:899px">null</i><i class="c n" style="left:1059px">null</i><i class="c n" style="left:1219px">null</i></div>
<div class="r" style="top:168px"><i class="c ix">9</i><span class="c k" style="left:103px">영업팀</span><span class="c k" style="left:263px">최지훈</span><span class="c k" style="left:423px">여</span><span class="c k" style="left:583px">구리</span><span class="c p" style="left:743px">02-1916-4495</span><i class="c n" style="left:899px">null</i><i class="c n" style="left:1059px">null</i><i class="c n" style="left:1219px">100</i></div>
<div class="r" style="top:189px"><i class="c ix">10</i><span class="c k" style="left:103px">마케팅</span><span class="c k" style="left:263px">최지훈</span><span class="c k" style="left:423px">남</span><span class="c k" style="left:583px">대전</span><span class="c p" style="left:743px">02-1846-7248</span><i class="c n" style="left:899px">null</i><i class="c n" style="left:1059px">null</i><i class="c n" style="left:1219px">null</i></div>
<div class="r" style="top:210px"><i class="c ix">11</i><span class="c k" style="left:103px">재무팀</span><span class="c k" style="left:263px">한지민</span><span class="c k" style="left:423px">여</span><span class="c k" style="left:583px">부산</span><span class="c p" style="left:743px">02-1569-3159</span><i class="c n" style="left:899px">null</i><i class="c n" style="left:1059px">null</i><i class="c n" style="left:1219px">null</i></div>
<div class="r" style="top:231px"><i class="c ix">12</i><span class="c k" style="left:103px">영업팀</span><span class="c k" style="left:263px">윤태호</span><span class="c k" style="left:423px">남</span><span class="c k" style="left:583px">속초</span><span class="c p" style="left:743px">02-1479-5406</span><i class="c n" style="left:899px">null</i><i class="c n" style="left:1059px">null</i><i class="c n" style="left:1219px">28</i></div>
<div class="r" style="top:252px"><i class="c ix">13</i><span class="c k" style="left:103px">관리팀</span><span class="c k" style="left:263px">윤태호</span><span class="c k" style="left:423px">여</span><span class="c k" style="left:583px">청주</span><span class="c p" style="left:743px">02-1781-7732</span><i class="c n" style="left:899px">null</i><i class="c n" style="left:1059px">null</i><i class="c n" style="left:1219px">null</i></div>
<div class="r" style="top:273px"><i class="c ix">14</i><span class="c k" style="left:103px">생산팀</span><span class="c k" style="left:263px">한지민</span><span class="c k" style="left:423px">남</span><span class="c k" style="left:583px">구리</span><span class="c p" style="left:743px">02-1228-2167</span><i class="c n" style="left:899px">null</i><i class="c n" style="left:1059px">null</i><i class="c n" style="left:1219px">105</i></div>
<div class="r" style="top:294px"><i class="c ix">15</i><span class="c k" style="left:103px">재무팀</span><span class="c k" style="left:263px">박철수</span><span class="c k" style="left:423px">남</span><span class="c k" style="left:583px">대구</span><span class="c p" style="left:743px">02-1747-3392</span><i class="c n" style="left:899px">30</i><i class="c n" style="left:1059px">1</i><i class="c n" style="left:1219px">null</i></div>
<div class="r" style="top:315px"><i class="c ix">16</i><span class="c k" style="left:103px">생산팀</span><span class="c k" style="left:263px">윤태호</span><span class="c k" style="left:423px">여</span><span class="c k" style="left:583px">부산</span><span class="c p" style="left:743px">02-1162-9797</span><i class="c n" style="left:899px">55</i><i class="c n" style="left:1059px">3</i><i class="c n" style="left:1219px">null</i></div>
<div class="r" style="top:336px"><i class="c ix">17</i><span class="c k" style="left:103px">관리팀</span><span class="c k" style="left:263px">윤태호</span><span class="c k" style="left:423px">남</span><span class="c k" style="left:583px">대전</span><span class="c p" style="left:743px">02-1323-9709</span><i class="c n" style="left:899px">null</i><i class="c n" style="left:1059px">null</i><i class="c n" style="left:1219px">55</i></div>
<div class="r" style="top:357px"><i class="c ix">18</i><span class="c k" style="left:103px">재무팀</span><span class="c k" style="left:263px">윤태호</span><span class="c k" style="left:423px">여</span><span class="c k" style="left:583px">광주</span><span class="c p" style="left:743px">02-1105-4599</span><i class="c n" style="left:899px">110</i><i class="c n" style="left:1059px">3</i><i class="c n" style="left:1219px">null</i></div>
<div class="r" style="top:378px"><i class="c ix">19</i><span class="c k" style="left:103px">영업팀</span><span class="c k" style="left:263px">최지훈</span><span class="c k" style="left:423px">남</span><span class="c k" style="left:583px">강릉</span><span class="c p" style="left:743px">02-1369-5020</span><i class="c n" style="left:899px">null</i><i class="c n" style="left:1059px">null</i><i class="c n" style="left:1219px">88</i></div>
<div class="r" style="top:399px"><i class="c ix">20</i><span class="c k" style="left:103px">관리팀</span><span class="c k" style="left:263px">김민수</span><span class="c k" style="left:423px">여</span><span class="c k" style="left:583px">대전</span><span class="c p" style="left:743px">02-1857-9855</span><i class="c n" style="left:899px">null</i><i class="c n" style="left:1059px">null</i><i class="c n" style="left:1219px">null</i></div>
<div class="r" style="top:420px"><i class="c ix">21</i><span class="c k" style="left:103px">비서실</span><span class="c k" style="left:263px">최지훈</span><span class="c k" style="left:423px">남</span><span class="c k" style="left:583px">부산</span><span class="c p" style="left:743px">02-1251-1805</span><i class="c n" style="left:899px">32</i><i class="c n" style="left:1059px">3</i><i class="c n" style="left:1219px">null</i></div>
<div class="r" style="top:441px"><i class="c ix">22</i><span class="c k" style="left:103px">구매팀</span><span class="c k" style="left:263px">박철수</span><span class="c k" style="left:423px">여</span><span class="c k" style="left:583px">강릉</span><span class="c p" style="left:743px">02-1892-6381</span><i class="c n" style="left:899px">null</i><i class="c n" style="left:1059px">null</i><i class="c n" style="left:1219px">null</i></div>
<div class="r" style="top:462px"><i class="c ix">23</i><span class="c k" style="left:103px">비서실</span><span class="c k" style="left:263px">정수진</span><span class="c k" style="left:423px">여</span><span class="c k" style="left:583px">대구</span><span class="c p" style="left:743px">02-1960-7169</span><i class="c n" style="left:899px">null</i><i class="c n" style="left:1059px">null</i><i class="c n" style="left:1219px">null</i></div>
<div class="r" style="top:483px"><i class="c ix">24</i><span class="c k" style="left:103px">생산팀</span><span class="c k" style="left:263px">김민수</span><span class="c k" style="left:423px">남</span><span class="c k" style="left:583px">대전</span><span class="c p" style="left:743px">02-1305-8323</span><i class="c n" style="left:899px">null</i><i class="c n" style="left:1059px">null</i><i class="c n" style="left:1219px">null</i></div>
<div class="r" style="top:504px"><i class="c ix">25</i><span class="c k" style="left:103px">마케팅</span><span class="c k" style="left:263px">강민아</span><span class="c k" style="left:423px">여</span><span class="c k" style="left:583px">남양주</span><span class="c p" style="left:743px">02-1757-9384</span><i class="c n" style="left:899px">null</i><i class="c n" style="left:1059px">null</i><i class="c n" style="left:1219px">null</i></div>
<div class="r" style="top:525px"><i class="c ix">26</i><span class="c k" style="left:103px">영업팀</span><span class="c k" style="left:263px">최지훈</span><span class="c k" style="left:423px">여</span><span class="c k" style="left:583px">강릉</span><span class="c p" style="left:743px">02-1415-7886</span><i class="c n" style="left:899px">28</i><i class="c n" style="left:1059px">2</i><i class="c n" style="left:1219px">null</i></div>
<div class="r" style="top:546px"><i class="c ix">27</i><span class="c k" style="left:103px">구매팀</span><span class="c k" style="left:263px">김민수</span><span class="c k" style="left:423px">남</span><span class="c k" style="left:583px">광주</span><span class="c p" style="left:743px">02-1360-3998</span><i class="c n" style="left:899px">null</i><i class="c n" style="left:1059px">null</i><i class="c n" style="left:1219px">null</i></div>
<div class="r" style="top:567px"><i class="c ix">28</i><span class="c k" style="left:103px">영업팀</span><span class="c k" style="left:263px">김민수</span><span class="c k" style="left:423px">남</span><span class="c k" style="left:583px">춘천</span><span class="c p" style="left:743px">02-1692-7590</span><i class="c n" style="left:899px">null</i><i class="c n" style="left:1059px">null</i><i class="c n" style="left:1219px">null</i></div>
<div class="r" style="top:588px"><i class="c ix">29</i><span class="c k" style="left:103px">마케팅</span><span class="c k" style="left:263px">윤태호</span><span class="c k" style="left:423px">남</span><span class="c k" style="left:583px">속초</span><span class="c p" style="left:743px">02-1326-6586</span><i class="c n" style="left:899px">null</i><i class="c n" style="left:1059px">null</i><i class="c n" style="left:1219px">29</i></div>
<div class="r" style="top:609px"><i class="c ix">30</i><span class="c k" style="left:103px">개발팀</span><span class="c k" style="left:263px">윤태호</span><span class="c k" style="left:423px">남</span><span class="c k" style="left:583px">대구</span><span class="c p" style="left:743px">02-1955-4857</span><i class="c n" style="left:899px">33</i><i class="c n" style="left:1059px">3</i><i class="c n" style="left:1219px">null</i></div>
<div class="r" style="top:630px"><i class="c ix">31</i><span class="c k" style="left:103px">관리팀</span><span class="c k" style="left:263px">김민수</span><span class="c k" style="left:423px">남</span><span class="c k" style="left:583px">포항</span><span class="c p" style="left:743px">02-1842-3259</span><i class="c n" style="left:899px">28</i><i class="c n" style="left:1059px">1</i><i class="c n" style="left:1219px">null</i></div>
<div class="r" style="top:651px"><i class="c ix">32</i><span class="c k" style="left:103px">마케팅</span><span class="c k" style="left:263px">김민수</span><span class="c k" style="left:423px">남</span><span class="c k" style="left:583px">청주</span><span class="c p" style="left:743px">02-1358-2903</span><i class="c n" style="left:899px">29</i><i class="c n" style="left:1059px">1</i><i class="c n" style="left:1219px">null</i></div>
<div class="r" style="top:672px"><i class="c ix">33</i><span class="c k" style="left:103px">비서실</span><span class="c k" style="left:263px">이영희</span><span class="c k" style="left:423px">남</span><span class="c k" style="left:583px">대전</span><span class="c p" style="left:743px">02-1432-6928</span><i class="c n" style="left:899px">null</i><i class="c n" style="left:1059px">null</i><i class="c n" style="left:1219px">null</i></div>
<div class="r" style="top:693px"><i class="c ix">34</i><span class="c k" style="left:103px">재무팀</span><span class="c k" style="left:263px">이영희</span><span class="c k" style="left:423px">여</span><span class="c k" style="left:583px">속초</span><span class="c p" style="left:743px">02-1919-7065</span><i class="c n" style="left:899px">null</i><i class="c n" style="left:1059px">null</i><i class="c n" style="left:1219px">105</i></div>
<div class="r" style="top:714px"><i class="c ix">35</i><span class="c k" style="left:103px">기술팀</span><span class="c k" style="left:263px">최지훈</span><span class="c k" style="left:423px">여</span><span class="c k" style="left:583px">대구</span><span class="c p" style="left:743px">02-1508-5611</span><i class="c n" style="left:899px">100</i><i class="c n" style="left:1059px">1</i><i class="c n" style="left:1219px">null</i></div>
<div class="r" style="top:735px"><i class="c ix">36</i><span class="c k" style="left:103px">기술팀</span><span class="c k" style="left:263px">김민수</span><span class="c k" style="left:423px">여</span><span class="c k" style="left:583px">속초</span><span class="c p" style="left:743px">02-1168-7720</span><i class="c n" style="left:899px">110</i><i class="c n" style="left:1059px">1</i><i class="c n" style="left:1219px">null</i></div>
<div class="r" style="top:756px"><i class="c ix">37</i><span class="c k" style="left:103px">구매팀</span><span class="c k" style="left:263px">강민아</span><span class="c k" style="left:423px">여</span><span class="c k" style="left:583px">남양주</span><span class="c p" style="left:743px">02-1692-8704</span><i class="c n" style="left:899px">null</i><i class="c n" style="left:1059px">null</i><i class="c n" style="left:1219px">null</i></div>
<div class="r" style="top:777px"><i class="c ix">38</i><span class="c k" style="left:103px">생산팀</span><span class="c k" style="left:263px">이영희</span><span class="c k" style="left:423px">남</span><span class="c k" style="left:583px">부산</span><span class="c p" style="left:743px">02-1673-2403</span><i class="c n" style="left:899px">null</i><i class="c n" style="left:1059px">null</i><i class="c n" style="left:1219px">null</i></div>
<div class="r" style="top:798px"><i class="c ix">39</i><span class="c k" style="left:103px">구매팀</span><span class="c k" style="left:263px">박철수</span><span class="c k" style="left:423px">여</span><span class="c k" style="left:583px">대구</span><span class="c p" style="left:743px">02-1221-5512</span><i class="c n" style="left:899px">null</i><i class="c n" style="left:1059px">null</i><i class="c n" style="left:1219px">null</i></div>

</div>
<div id="rncol"><b style="top:0px">1</b><b style="top:21px">2</b><b style="top:42px">3</b><b style="top:63px">4</b><b style="top:84px">5</b><b style="top:105px">6</b><b style="top:126px">7</b><b style="top:147px">8</b><b style="top:168px">9</b><b style="top:189px">10</b><b style="top:210px">11</b><b style="top:231px">12</b><b style="top:252px">13</b><b style="top:273px">14</b><b style="top:294px">15</b><b style="top:315px">16</b><b style="top:336px">17</b><b style="top:357px">18</b><b style="top:378px">19</b><b style="top:399px">20</b><b style="top:420px">21</b><b style="top:441px">22</b><b style="top:462px">23</b><b style="top:483px">24</b><b style="top:504px">25</b><b style="top:525px">26</b><b style="top:546px">27</b><b style="top:567px">28</b><b style="top:588px">29</b><b style="top:609px">30</b><b style="top:630px">31</b><b style="top:651px">32</b><b style="top:672px">33</b><b style="top:693px">34</b><b style="top:714px">35</b><b style="top:735px">36</b><b style="top:756px">37</b><b style="top:777px">38</b><b style="top:798px">39</b></div>
<div id="hs"><div class="th"></div>
<svg style="left:17px;top:3px" width="9" height="12" viewBox="0 0 9 12"><path d="M7.6 0.8 L2.4 5.8 L7.6 10.8" stroke="#555" stroke-width="2.6" fill="none"/></svg>
<svg style="left:1392.5px;top:3px" width="9" height="12" viewBox="0 0 9 12"><path d="M1.4 0.8 L6.6 5.8 L1.4 10.8" stroke="#555" stroke-width="2.6" fill="none"/></svg>
</div>
<div id="vs"><div class="th"></div>
<svg style="left:2.5px;top:16px" width="12" height="9" viewBox="0 0 12 9"><path d="M0.8 7.8 L5.9 2.6 L11 7.8" stroke="#555" stroke-width="2.6" fill="none"/></svg>
<svg style="left:2.5px;top:761px" width="12" height="9" viewBox="0 0 12 9"><path d="M0.8 1.2 L5.9 6.4 L11 1.2" stroke="#555" stroke-width="2.6" fill="none"/></svg>
</div>
<div id="rsplit"></div><div id="right">
<span class="t" style="left:15px;top:17px;font-size:20px;line-height:24px;font-weight:normal;letter-spacing:.9px;color:#f2f2f2">쿼리 설정</span>
<svg style="left:227px;top:24px" width="12" height="12" viewBox="0 0 12 12"><path d="M1 1 L11 11 M11 1 L1 11" stroke="#fff" stroke-width="1.2" fill="none"/></svg>
<svg style="left:10px;top:63px" width="7" height="7" viewBox="0 0 7 7"><path d="M6.5 0.5 V6.5 H0.5 Z" fill="#fff"/></svg>
<span class="t" style="left:23px;top:61.5px">속성</span>
<span class="t" style="left:23px;top:81px">이름</span>
<div class="a" style="left:23px;top:97px;width:218px;height:22px;background:#363636;border:1px solid #414141"></div>
<span class="t" style="left:29px;top:102px">표1</span>
<span class="t" style="left:23px;top:128.5px">모든 속성</span>
<svg style="left:10px;top:164px" width="7" height="7" viewBox="0 0 7 7"><path d="M6.5 0.5 V6.5 H0.5 Z" fill="#fff"/></svg>
<span class="t" style="left:23px;top:162px">적용된 단계</span>
<div id="steps">
<div class="s" style="top:0px">원본</div>
<div class="s" style="top:20px">변경된 유형</div>
<div class="s" style="top:40px">선택한 열만 피벗 해제됨</div>
<div class="s" style="top:60px">추가된 사용자 지정 항목</div>
<div class="s" style="top:80px">제거된 열 수</div>
<div class="s sel" style="top:100px">피벗 열</div>
<svg style="left:5px;top:105px" width="12" height="11" viewBox="0 0 12 11"><path d="M1 1.5 L11 10 M10.5 1 L1.5 10" stroke="#fff" stroke-width="1.9" stroke-linecap="round" fill="none"/></svg>
<svg style="left:197px;top:65px" width="12" height="12" viewBox="0 0 12 12"><circle cx="6" cy="6" r="3" fill="none" stroke="#c9c9c9" stroke-width="2"/><path d="M9.20 6.00 L11.90 6.00M8.26 8.26 L10.17 10.17M6.00 9.20 L6.00 11.90M3.74 8.26 L1.83 10.17M2.80 6.00 L0.10 6.00M3.74 3.74 L1.83 1.83M6.00 2.80 L6.00 0.10M8.26 3.74 L10.17 1.83" stroke="#c9c9c9" stroke-width="2" fill="none"/></svg>
<svg style="left:197px;top:105px" width="12" height="12" viewBox="0 0 12 12"><circle cx="6" cy="6" r="3" fill="none" stroke="#c9c9c9" stroke-width="2"/><path d="M9.20 6.00 L11.90 6.00M8.26 8.26 L10.17 10.17M6.00 9.20 L6.00 11.90M3.74 8.26 L1.83 10.17M2.80 6.00 L0.10 6.00M3.74 3.74 L1.83 1.83M6.00 2.80 L6.00 0.10M8.26 3.74 L10.17 1.83" stroke="#c9c9c9" stroke-width="2" fill="none"/></svg>
</div>
</div>
<div id="status"><span style="left:1px">15개 열, 100개 행</span><span style="left:105px">상위 1000개 행을 기준으로 한 열 프로파일링</span><span style="left:1738px">오후 1:21에 다운로드한 미리 보기입니다.</span></div>
</body></html>
